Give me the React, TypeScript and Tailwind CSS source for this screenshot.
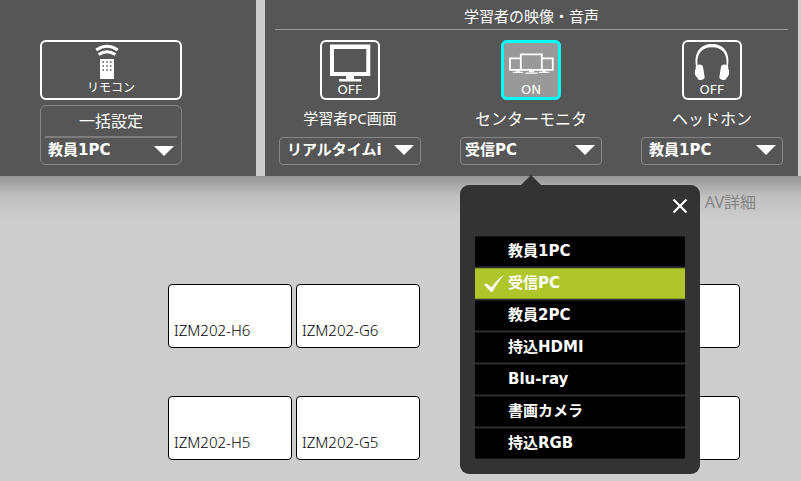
import { useState } from "react";
import type { ReactNode } from "react";
import clsx from "clsx";

const sources = [
  "教員1PC",
  "受信PC",
  "教員2PC",
  "持込HDMI",
  "Blu-ray",
  "書画カメラ",
  "持込RGB",
];

const seatRows = [
  ["IZM202-H6", "IZM202-G6"],
  ["IZM202-H5", "IZM202-G5"],
];

const boldFont = "font-['DejaVu_Sans','Noto_Sans_CJK_JP',sans-serif] font-bold";

function RemoteIcon() {
  return (
    <svg viewBox="0 0 32 36" className="w-8 h-9" fill="none" aria-hidden="true">
      <path d="M1.3 6Q12 -1.4 22.7 6" stroke="#fff" strokeWidth="3" />
      <path d="M3.6 10.6Q12 5 20.4 10.6" stroke="#fff" strokeWidth="3" />
      <path d="M5 15h14v20H5z" fill="#fff" />
      <path
        d="M7.5 18h1.5M11.25 18h1.5M15 18h1.5M7.5 22h1.5M11.25 22h1.5M15 22h1.5M7.5 26h1.5M11.25 26h1.5M15 26h1.5"
        stroke="#565656"
        strokeWidth="1.5"
      />
    </svg>
  );
}

function MonitorIcon() {
  return (
    <svg viewBox="0 0 60 44" className="w-[60px] h-11" fill="#fff" aria-hidden="true">
      <path fillRule="evenodd" d="M10 4.5h40.3V36H10zM14 9v23h32.3V9z" />
      <path d="M26 36h8v3h7v2.6H19V39h7z" />
    </svg>
  );
}

function TripleMonitorIcon() {
  return (
    <svg viewBox="0 0 60 44" className="w-[60px] h-11" fill="none" stroke="#fff" strokeWidth="1.8" aria-hidden="true">
      <path d="M19.5 18.3H9v11.5h10.5M41 18.3h10.8v11.5H41" />
      <path d="M19.8 14.4h21v15.4h-21z" />
      <path d="M12 32.3h10M38 32.3h10M24.5 33.2h12" strokeWidth="1.3" />
      <path d="M15 31h4M28 31.5h5M41 31h4" strokeWidth="1.6" />
    </svg>
  );
}

function HeadphoneIcon() {
  return (
    <svg viewBox="0 0 60 44" className="w-[60px] h-11" fill="#fff" aria-hidden="true">
      <path d="M14 26C11.5 12 19 4 30 4s18.5 8 16 22l-1.6-.4C46 14 40 7.2 30 7.2S14 14 15.6 25.600z" />
      <rect x="14.4" y="24.5" width="7.4" height="15.5" rx="3" transform="rotate(-9 18 32)" />
      <rect x="38.2" y="24.5" width="7.4" height="15.5" rx="3" transform="rotate(9 42 32)" />
      <path d="M15 27.5c-2.6 1.5-3 6.5-.6 9.5h2v-9.5zM45 27.5c2.6 1.5 3 6.5.6 9.5h-2v-9.500z" />
    </svg>
  );
}

type SourceSelectProps = {
  label: string;
  value: string;
  options: string[];
  active?: boolean;
  framed?: boolean;
  onChange?: (value: string) => void;
};

function SourceSelect({ label, value, options, active, framed = true, onChange }: SourceSelectProps) {
  return (
    <div className="relative w-full">
      <select
        aria-label={label}
        value={value}
        onChange={(e) => onChange?.(e.target.value)}
        className={clsx(
          "block w-full h-7 appearance-none bg-transparent text-[15px] leading-6 text-white pb-1 pr-9 outline-none",
          boldFont,
          framed && "rounded-[4px] border border-[#858585]",
          active ? "pl-1" : "pl-[7px]"
        )}
      >
        {options.map((option) => (
          <option key={option} className="bg-black">
            {option}
          </option>
        ))}
      </select>
      <svg viewBox="0 0 20 10" className="absolute right-[7px] top-2 w-5 h-2.5 pointer-events-none" fill="#fff" aria-hidden="true">
        <path d="M0 0h20L10 10z" />
      </svg>
    </div>
  );
}

type ControlProps = {
  label: string;
  small?: boolean;
  on?: boolean;
  icon: ReactNode;
  children: ReactNode;
};

function Control({ label, small, on, icon, children }: ControlProps) {
  return (
    <div className="relative w-[142px] flex flex-col items-center">
      <button
        type="button"
        aria-label={label}
        aria-pressed={!!on}
        className={clsx(
          "size-[60px] rounded-[6px] flex flex-col items-center overflow-hidden text-white ring-inset",
          on ? "bg-[#999] ring-3 ring-[#00ffff]" : "ring-2 ring-white"
        )}
      >
        {icon}
        <span className="h-3 flex items-center text-[13px] leading-3 font-['DejaVu_Sans',sans-serif]">
          {on ? "ON" : "OFF"}
        </span>
      </button>
      <p
        className={clsx(
          "h-[37px] flex items-center justify-center whitespace-nowrap",
          small ? "text-[15px]" : "text-base"
        )}
      >
        {label}
      </p>
      {children}
    </div>
  );
}

type SourceMenuProps = {
  value: string;
  onChange: (value: string) => void;
  onClose: () => void;
};

function SourceMenu({ value, onChange, onClose }: SourceMenuProps) {
  return (
    <div className="absolute z-10 left-0 top-full mt-5 w-60 rounded-[9px] bg-[#333] px-[15px] pb-[15px]">
      <svg viewBox="0 0 20 10" className="absolute left-[61px] bottom-full w-5 h-2.5" fill="#333" aria-hidden="true">
        <path d="M10 0l10 10H0z" />
      </svg>
      <div className="h-[51px] flex items-start justify-end pt-[13px]">
        <button type="button" aria-label="閉じる" onClick={onClose}>
          <svg viewBox="0 0 16 16" className="size-4 -mr-[3px]" stroke="#fff" strokeWidth="2.2" aria-hidden="true">
            <path d="M1.5 1.5l13 13M14.5 1.5l-13 13" />
          </svg>
        </button>
      </div>
      <fieldset className="flex flex-col gap-px">
        {sources.map((source) => (
          <label
            key={source}
            className={clsx(
              "h-[31px] flex items-center text-[15px] cursor-pointer border-y",
              boldFont,
              source === value ? "bg-[#aec62a] border-[#8a9d25]" : "bg-black border-[#161616]"
            )}
          >
            <input
              type="radio"
              name="source"
              className="sr-only"
              checked={source === value}
              onChange={() => onChange(source)}
            />
            <span className="w-[33px] flex justify-center pl-1">
              {source === value && (
                <svg viewBox="0 0 20 17" className="w-5 h-[17px]" fill="#fff" aria-hidden="true">
                  <path d="M0 9.5l2.5-1 5 4C11 7.5 15 3 20 0 15.5 5 11.5 11 8.5 17H7z" />
                </svg>
              )}
            </span>
            {source}
          </label>
        ))}
      </fieldset>
    </div>
  );
}

function Seat({ name }: { name?: string }) {
  return (
    <div className="w-31 h-16 shrink-0 rounded-[4px] border border-black bg-white flex items-end px-[5px] pb-[7px] text-[15px] leading-5 font-light text-black font-['Noto_Sans','Noto_Sans_CJK_JP',sans-serif]">
      {name}
    </div>
  );
}

export default function App() {
  const [batch, setBatch] = useState("教員1PC");
  const [screen, setScreen] = useState("リアルタイムi");
  const [monitor, setMonitor] = useState("受信PC");
  const [headphone, setHeadphone] = useState("教員1PC");
  const [menuOpen, setMenuOpen] = useState(true);

  return (
    <div className="min-h-screen flex flex-col bg-[#cdcdcd] text-white font-['Noto_Sans','Noto_Sans_CJK_JP',sans-serif]">
      <header className="flex gap-[9px] pr-[3px]">
        <section className="w-64 shrink-0 bg-[#565656] pt-10 pl-10">
          <div className="w-[142px] flex flex-col gap-[5px]">
            <button
              type="button"
              className="h-[60px] rounded-[6px] border-2 border-white flex flex-col items-center pt-0.5 text-xs leading-4"
            >
              <RemoteIcon />
              リモコン
            </button>
            <div className="h-[60px] rounded-[6px] border border-[#858585]">
              <p className="h-8 mx-1 flex items-center justify-center border-b-2 border-[#7d7d7d] text-base">
                一括設定
              </p>
              <SourceSelect label="一括設定" value={batch} options={sources} framed={false} onChange={setBatch} />
            </div>
          </div>
        </section>

        <section className="flex-1 bg-[#565656] pb-[11px]">
          <h2 className="h-[30px] mx-2.5 pt-1 flex items-center justify-center border-b border-[#999] text-[15px]">
            学習者の映像・音声
          </h2>
          <div className="flex justify-between pt-2.5 pl-3.5 pr-[15px]">
            <Control label="学習者PC画面" small icon={<MonitorIcon />}>
              <SourceSelect
                label="学習者PC画面"
                value={screen}
                options={["リアルタイムi", ...sources]}
                onChange={setScreen}
              />
            </Control>
            <Control label="センターモニタ" on icon={<TripleMonitorIcon />}>
              <SourceSelect label="センターモニタ" value={monitor} options={sources} active onChange={setMonitor} />
              {menuOpen && (
                <SourceMenu value={monitor} onChange={setMonitor} onClose={() => setMenuOpen(false)} />
              )}
            </Control>
            <Control label="ヘッドホン" icon={<HeadphoneIcon />}>
              <SourceSelect label="ヘッドホン" value={headphone} options={sources} onChange={setHeadphone} />
            </Control>
          </div>
        </section>
      </header>

      <main className="flex-1 bg-linear-to-b from-[#969696] via-[#c0c0c0] via-[20px] to-[#cdcdcd] to-[44px]">
        <div className="h-27 flex justify-end pt-3.5 pr-[45px]">
          <a href="#av" className="h-6 leading-6 text-base text-[#858585]">
            AV詳細
          </a>
        </div>
        <div className="flex flex-col gap-12 pl-42 pb-5">
          {seatRows.map((row) => (
            <div key={row[0]} className="flex gap-[68px]">
              <div className="flex gap-1">
                {row.map((name) => (
                  <Seat key={name} name={name} />
                ))}
              </div>
              <div className="flex gap-1">
                <Seat />
                <Seat />
              </div>
            </div>
          ))}
        </div>
      </main>
    </div>
  );
}
